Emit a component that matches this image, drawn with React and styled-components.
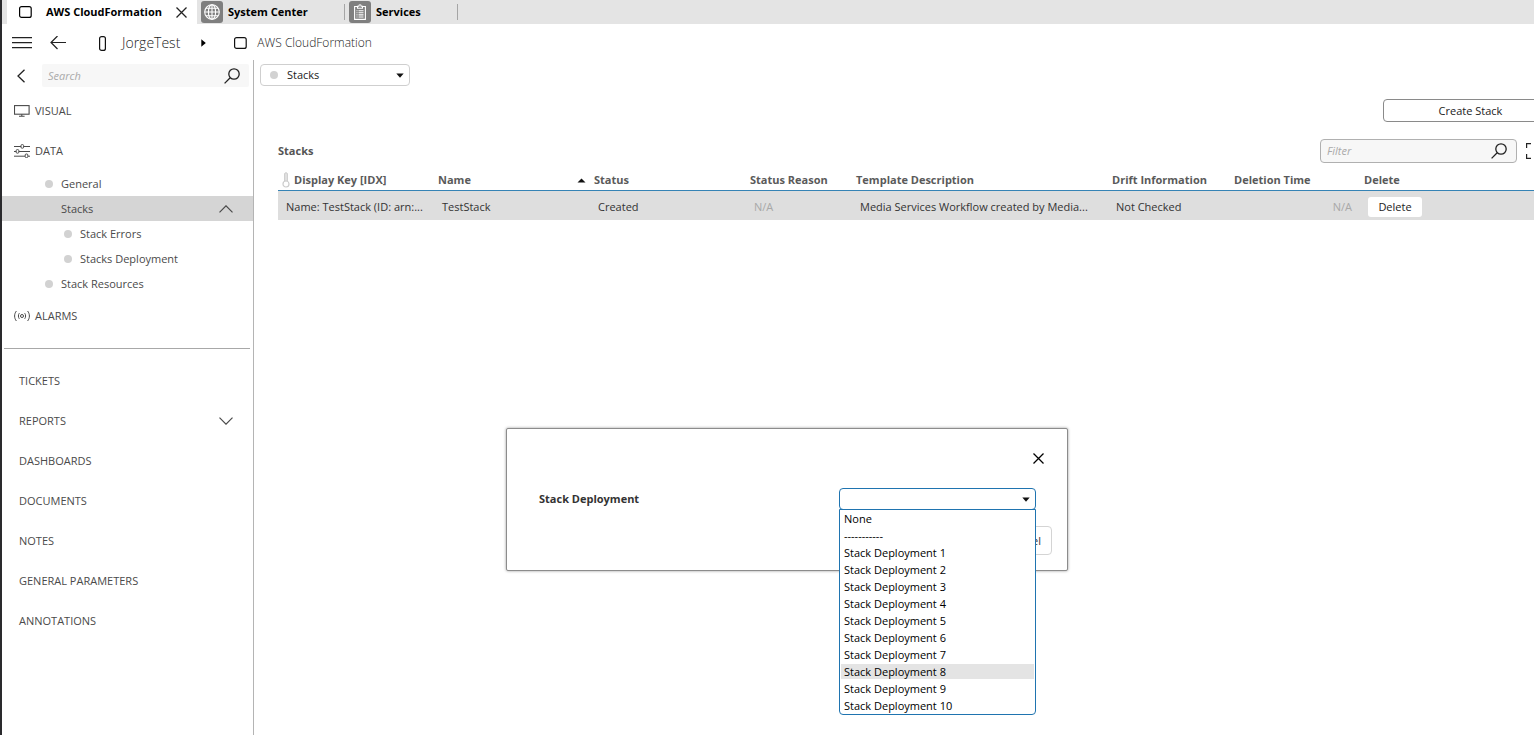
import React, { useState } from 'react'
import styled, { createGlobalStyle } from 'styled-components'

const GlobalStyle = createGlobalStyle`
    * {
        box-sizing: border-box;
    }

    body {
        margin: 0;
        background: #fff;
        color: #333;
        font: 11px/16px 'Open Sans', 'Noto Sans', sans-serif;
        overflow: hidden;
    }

    button, input, select {
        font: inherit;
        color: inherit;
        margin: 0;
    }

    button {
        cursor: pointer;
    }

    svg {
        display: block;
        flex: none;
        fill: none;
        stroke: currentColor;
    }
`

const Page = styled.div`
    display: flex;
    flex-direction: column;
    min-height: 100vh;
    border-left: 2px solid #2a2a2d;
    padding-right: 1px;
`

const TabBar = styled.nav`
    display: flex;
    height: 24px;
    padding-left: 5px;
    background: #e4e4e4;
`

const Tab = styled.div`
    display: flex;
    align-items: center;
    gap: ${props => props.$active ? '14px' : '5px'};
    width: ${props => props.$width}px;
    padding: ${props => props.$active ? '0 8px 0 12px' : '0 0 0 4px'};
    background: ${props => props.$active ? '#fff' : 'transparent'};
    border-right: 1px solid ${props => props.$active ? '#fff' : '#a5a5a5'};
    background-clip: padding-box;
    height: ${props => props.$active ? '24px' : '16px'};
    margin-top: ${props => props.$active ? '0' : '4px'};
    color: #000;
`

const TabLink = styled.a`
    color: #000;
    font-weight: 700;
    text-decoration: none;
    white-space: nowrap;
`

const TabBadge = styled.span`
    display: grid;
    place-items: center;
    width: 22px;
    height: 22px;
    border-radius: 3px;
    background: #7f7f7f;
    color: #fff;
`

const IconButton = styled.button`
    display: grid;
    place-items: center;
    flex: none;
    padding: 0;
    border: 0;
    background: none;
    color: ${props => props.$color || '#222'};
`

const Crumbs = styled.header`
    display: flex;
    align-items: center;
    height: 36px;
    padding: 2px 0 0 10px;
    color: #111;

    a {
        color: #222;
        font-size: 12px;
        font-weight: 300;
        text-decoration: none;
    }
`

const HostLink = styled.a`
    margin: 0 21px 0 16px;

    && {
        font-size: 14px;
    }
`

const ElementLink = styled.a`
    margin-left: 10px;
`

const CrumbTools = styled.div`
    display: flex;
    align-items: center;
    gap: 18px;
    margin-right: 33px;
`

const CrumbSpace = styled.span`
    width: 28px;
`

const Body = styled.div`
    display: flex;
    flex: 1;
`

const Sidebar = styled.aside`
    flex: none;
    width: 252px;
    padding-top: 4px;
    border-right: 1px solid #b4b4b4;
    color: #555;
`

const SearchRow = styled.div`
    display: flex;
    align-items: center;
    gap: 17px;
    padding: 0 4px 0 15px;
    margin-bottom: 4px;
`

const SearchBox = styled.label`
    display: flex;
    align-items: center;
    flex: ${props => props.$bordered ? 'none' : '1'};
    width: ${props => props.$bordered ? '197px' : 'auto'};
    height: ${props => props.$bordered ? '24px' : '23px'};
    padding: 0 9px 0 6px;
    border: ${props => props.$bordered ? '1px solid #b0b0b0' : '0'};
    border-radius: ${props => props.$bordered ? '4px' : '2px'};
    background: #f7f7f7;
    color: #222;

    input {
        flex: 1;
        min-width: 0;
        padding: 0;
        border: 0;
        outline: 0;
        background: none;
    }

    input::placeholder {
        color: #aaa;
        font-style: italic;
        opacity: 1;
    }
`

const Section = styled.a`
    display: flex;
    align-items: center;
    gap: 5px;
    height: 40px;
    padding: 0 20px 0 ${props => props.$icon ? '12px' : '17px'};
    color: #4a4a4a;
    text-decoration: none;
`

const TreeItem = styled.a`
    display: flex;
    align-items: center;
    gap: 8px;
    height: 25px;
    padding: 0 20px 0 ${props => props.$level === 2 ? '62px' : '43px'};
    background: ${props => props.$selected ? '#d5d5d5' : 'transparent'};
    color: #4a4a4a;
    text-decoration: none;
`

const Grow = styled.span`
    flex: 1;
`

const Dot = styled.span`
    flex: none;
    width: 8px;
    height: 8px;
    border-radius: 50%;
    background: ${props => props.$hidden ? 'transparent' : '#d2d2d2'};
`

const Divider = styled.hr`
    height: 1px;
    margin: 12px 3px 12px 2px;
    border: 0;
    background: #a8a8a8;
`

const Main = styled.main`
    flex: 1;
    min-width: 0;
    padding: 4px 0 0 6px;
    overflow: hidden;
`

const SelectWrap = styled.div`
    position: relative;
    display: flex;
    align-items: center;
    width: ${props => props.$width}px;
    height: 22px;
    border: 1px solid ${props => props.$open ? '#1f74b0' : '#cfcfcf'};
    border-radius: 4px;
    background: #fff;
    color: #222;

    select {
        flex: 1;
        min-width: 0;
        height: 100%;
        padding: 0 20px 0 9px;
        border: 0;
        outline: 0;
        background: none;
        appearance: none;
    }

    ${Dot} {
        margin-left: 9px;
    }

    svg {
        position: absolute;
        right: 5px;
        pointer-events: none;
    }
`

const Actions = styled.div`
    display: flex;
    justify-content: flex-end;
    margin: 13px -24px 0 0;
`

const CreateButton = styled.button`
    width: 175px;
    height: 23px;
    padding: 0;
    border: 1px solid #8a8a8a;
    border-radius: 4px;
    background: #fff;
    color: #222;
`

const Panel = styled.section`
    padding: 17px 0 0 18px;
`

const PanelHead = styled.div`
    display: flex;
    align-items: center;
    gap: 9px;
    margin-right: -7px;

    h2 {
        flex: 1;
        margin: 0;
        color: #555;
        font-size: 11px;
    }
`

const Table = styled.table`
    width: 100%;
    margin-top: 5px;
    border-collapse: separate;
    border-spacing: 0;
    table-layout: fixed;

    th {
        height: 23px;
        padding: 2px 4px 0;
        border-bottom: 1px solid #3583b5;
        color: #5a5a5a;
        text-align: left;
        white-space: nowrap;
    }

    td {
        height: 29px;
        padding: 2px 8px 0;
        background: #dedede;
        overflow: hidden;
        text-overflow: ellipsis;
        white-space: nowrap;
    }
`

const HeadCell = styled.div`
    display: flex;
    align-items: center;
    justify-content: space-between;
`

const KeyCell = styled(HeadCell)`
    justify-content: flex-start;
    gap: 4px;

    svg {
        color: #ccc;
    }
`

const Missing = styled.td`
    color: #a8a8a8;
    text-align: ${props => props.$right ? 'right' : 'left'};
`

const DeleteButton = styled.button`
    display: block;
    width: 54px;
    height: 20px;
    padding: 0;
    border: 0;
    border-radius: 3px;
    background: #fff;
    color: #222;
`

const Dialog = styled.div`
    position: absolute;
    top: 428px;
    left: 506px;
    width: 562px;
    padding: 24px 15px 15px 32px;
    border: 1px solid #8c8c8c;
    border-radius: 2px;
    background: #fff;
    box-shadow: 0 0 3px rgba(0, 0, 0, 0.4);
`

const DialogTop = styled.div`
    display: flex;
    justify-content: flex-end;
    height: 35px;
    padding-right: 8px;
    align-items: flex-start;
`

const DialogField = styled.div`
    display: flex;
    align-items: center;
    justify-content: space-between;
    padding-right: 16px;

    label {
        color: #333;
        font-weight: 700;
    }
`

const DialogFooter = styled.div`
    display: flex;
    justify-content: flex-end;
    margin-top: 16px;
`

const CancelButton = styled.button`
    height: 29px;
    padding: 0 10px;
    border: 1px solid #d4d4d4;
    border-radius: 4px;
    background: #fff;
`

const Options = styled.ul`
    position: absolute;
    z-index: 2;
    top: 20px;
    left: -1px;
    right: -1px;
    margin: 0;
    padding: 0 1px;
    border: 1px solid #1f74b0;
    border-radius: 0 0 4px 4px;
    background: #fff;
    list-style: none;
`

const Option = styled.li`
    height: 17px;
    padding: 0 3px;
    border: solid transparent;
    border-width: 1px 0;
    background: ${props => props.$active ? '#e4e4e4' : 'transparent'};
    background-clip: padding-box;
    color: #000;
    line-height: 15px;
    cursor: default;
`

const Square = () => (
    <svg width="13" height="12" viewBox="0 0 13 12">
        <rect x="0.6" y="0.6" width="11.6" height="10.8" rx="2" strokeWidth="1.2" />
    </svg>
)

const Cross = () => (
    <svg width="11" height="11" viewBox="0 0 11 11" strokeWidth="1.3">
        <path d="M0.5 0.5 10.5 10.5M10.5 0.5 0.5 10.5" />
    </svg>
)

const Magnifier = () => (
    <svg width="16" height="16" viewBox="0 0 16 16" strokeWidth="1.3">
        <circle cx="10" cy="6" r="5.2" />
        <path d="M6.2 9.8 0.6 15.4" />
    </svg>
)

const Chevron = ({ up }) => (
    <svg width="14" height="8" viewBox="0 0 14 8" strokeWidth="1.2">
        <path d={up ? 'M0.5 7.3 7 0.8 13.5 7.3' : 'M0.5 0.7 7 7.2 13.5 0.7'} />
    </svg>
)

const Caret = ({ up }) => (
    <svg width={up ? 9 : 8} height="5" viewBox="0 0 8 5">
        <path d={up ? 'M0 4.5 4 0.5 8 4.5Z' : 'M0.3 0.5H7.7L4 4.7Z'} fill="#111" stroke="none" />
    </svg>
)

const GlobeIcon = () => (
    <svg width="16" height="16" viewBox="0 0 16 16" strokeWidth="1.1">
        <circle cx="8" cy="8" r="7.3" />
        <ellipse cx="8" cy="8" rx="3.6" ry="7.3" />
        <path d="M8 0.7V15.3M0.7 8H15.3M1.8 4.3H14.2M1.8 11.7H14.2" />
    </svg>
)

const ClipboardIcon = () => (
    <svg width="12" height="16" viewBox="0 0 12 16" strokeWidth="1.1">
        <path d="M3.5 2.5H0.6V15.4H11.4V2.5H8.5" />
        <path d="M3.5 4.2V2.2H4.8C4.8 0.2 7.2 0.2 7.2 2.2H8.5V4.2Z" />
        <path d="M2.5 6.7H3.5M4.5 6.7H9.5M2.5 8.8H3.5M4.5 8.8H9.5M2.5 10.9H3.5M4.5 10.9H9.5M2.5 13H3.5M4.5 13H9.5" />
    </svg>
)

const MenuIcon = () => (
    <svg width="20" height="12" viewBox="0 0 20 12" strokeWidth="1.3">
        <path d="M0 0.7H20M0 5.7H20M0 10.7H20" />
    </svg>
)

const BackIcon = () => (
    <svg width="16" height="14" viewBox="0 0 16 14" strokeWidth="1.2">
        <path d="M16 6.5H1M7.5 0 1 6.5 7.5 13" />
    </svg>
)

const HostIcon = () => (
    <svg width="7" height="15" viewBox="0 0 7 15" strokeWidth="1.2">
        <rect x="0.6" y="0.6" width="5.8" height="13.8" rx="2" />
    </svg>
)

const CrumbArrow = () => (
    <svg width="5" height="8" viewBox="0 0 5 8">
        <path d="M0.3 0.3V7.7L4.8 4Z" fill="#000" stroke="none" />
    </svg>
)

const CollapseIcon = () => (
    <svg width="8" height="14" viewBox="0 0 8 14" strokeWidth="1.3">
        <path d="M7.5 0.7 1 7 7.5 13.3" />
    </svg>
)

const VisualIcon = () => (
    <svg width="16" height="12" viewBox="0 0 16 12" strokeWidth="1.1">
        <rect x="0.5" y="0.6" width="14.6" height="8.6" />
        <path d="M7.8 9.2V11M5 11.2H10.6" />
    </svg>
)

const DataIcon = () => (
    <svg width="16" height="14" viewBox="0 0 16 14" strokeWidth="1">
        <path d="M0 2.5H7M10 2.5H16M0 7.5H2M5 7.5H16M0 12.2H11M14 12.2H16" />
        <rect x="7" y="0.6" width="2.6" height="3.6" rx="1" />
        <rect x="2.2" y="5.6" width="2.6" height="3.6" rx="1" />
        <rect x="11.2" y="10" width="2.6" height="3.6" rx="1" />
    </svg>
)

const AlarmIcon = () => (
    <svg width="16" height="12" viewBox="0 0 16 12" strokeWidth="1">
        <circle cx="8" cy="6" r="1.5" />
        <path d="M5.3 3.2C4.1 4.8 4.1 7.2 5.3 8.8M10.7 3.2C11.9 4.8 11.9 7.2 10.7 8.8M2.4 1C0 4 0 8 2.4 11M13.6 1C16 4 16 8 13.6 11" />
    </svg>
)

const KeyIcon = () => (
    <svg width="8" height="16" viewBox="0 0 8 16">
        <path d="M2.6 9V1.8C2.6 0.4 5.4 0.4 5.4 1.8V9" fill="#e2e2e2" />
        <circle cx="4" cy="12" r="3" strokeWidth="1.2" />
    </svg>
)

const ExpandIcon = () => (
    <svg width="15" height="16" viewBox="0 0 15 16" strokeWidth="1.2">
        <path d="M5 0.6H0.6V5M10 0.6H14.4V5M5 15.4H0.6V11M10 15.4H14.4V11" />
    </svg>
)

const tree = [
    { name: 'General', level: 1 },
    { name: 'Stacks', level: 1, selected: true },
    { name: 'Stack Errors', level: 2 },
    { name: 'Stacks Deployment', level: 2 },
    { name: 'Stack Resources', level: 1 }
]

const links = ['TICKETS', 'REPORTS', 'DASHBOARDS', 'DOCUMENTS', 'NOTES', 'GENERAL PARAMETERS', 'ANNOTATIONS']

const columns = [156, 156, 156, 106, 256, 122, 130]

const deployments = ['None', '-----------']
for (let i = 1; i <= 10; i++) {
    deployments.push(`Stack Deployment ${i}`)
}

const SideMenu = () => (
    <Sidebar>
        <SearchRow>
            <IconButton type="button" aria-label="Collapse"><CollapseIcon /></IconButton>
            <SearchBox>
                <input type="text" placeholder="Search" aria-label="Search" />
                <Magnifier />
            </SearchBox>
        </SearchRow>
        <Section href="#visual" $icon><VisualIcon />VISUAL</Section>
        <Section href="#data" $icon><DataIcon />DATA</Section>
        {tree.map(item => (
            <TreeItem key={item.name} href="#page" $level={item.level} $selected={item.selected}>
                <Dot $hidden={item.selected} />
                <Grow>{item.name}</Grow>
                {item.selected && <Chevron up />}
            </TreeItem>
        ))}
        <Section href="#alarms" $icon><AlarmIcon />ALARMS</Section>
        <Divider />
        {links.map(name => (
            <Section key={name} href="#link">
                <Grow>{name}</Grow>
                {name === 'REPORTS' && <Chevron />}
            </Section>
        ))}
    </Sidebar>
)

const StacksTable = () => (
    <Table>
        <colgroup>
            {columns.map((width, i) => <col key={i} width={width} />)}
            <col />
        </colgroup>
        <thead>
            <tr>
                <th><KeyCell><KeyIcon />Display Key [IDX]</KeyCell></th>
                <th><HeadCell>Name <Caret up /></HeadCell></th>
                <th>Status</th>
                <th>Status Reason</th>
                <th>Template Description</th>
                <th>Drift Information</th>
                <th>Deletion Time</th>
                <th>Delete</th>
            </tr>
        </thead>
        <tbody>
            <tr>
                <td>Name: TestStack (ID: arn:...</td>
                <td>TestStack</td>
                <td>Created</td>
                <Missing>N/A</Missing>
                <td>Media Services Workflow created by Media...</td>
                <td>Not Checked</td>
                <Missing $right>N/A</Missing>
                <td><DeleteButton type="button">Delete</DeleteButton></td>
            </tr>
        </tbody>
    </Table>
)

const DeploymentDialog = () => {
    const [active, setActive] = useState('Stack Deployment 8')

    return (
        <Dialog role="dialog">
            <DialogTop>
                <IconButton type="button" aria-label="Close" $color="#000"><Cross /></IconButton>
            </DialogTop>
            <DialogField>
                <label htmlFor="deployment">Stack Deployment</label>
                <SelectWrap $width={197} $open>
                    <select id="deployment"><option /></select>
                    <Caret />
                    <Options>
                        {deployments.map(name => (
                            <Option key={name} $active={name === active} onMouseEnter={() => setActive(name)}>
                                {name}
                            </Option>
                        ))}
                    </Options>
                </SelectWrap>
            </DialogField>
            <DialogFooter>
                <CancelButton type="button">Cancel</CancelButton>
            </DialogFooter>
        </Dialog>
    )
}

const App = () => (
    <>
        <GlobalStyle />
        <Page>
            <TabBar>
                <Tab $active $width={190}>
                    <Square />
                    <TabLink href="#cloudformation">AWS CloudFormation</TabLink>
                    <IconButton type="button" aria-label="Close tab"><Cross /></IconButton>
                </Tab>
                <Tab $width={148}>
                    <TabBadge><GlobeIcon /></TabBadge>
                    <TabLink href="#system">System Center</TabLink>
                </Tab>
                <Tab $width={113}>
                    <TabBadge><ClipboardIcon /></TabBadge>
                    <TabLink href="#services">Services</TabLink>
                </Tab>
            </TabBar>
            <Crumbs>
                <CrumbTools>
                    <IconButton type="button" aria-label="Menu"><MenuIcon /></IconButton>
                    <IconButton type="button" aria-label="Back"><BackIcon /></IconButton>
                </CrumbTools>
                <HostIcon />
                <HostLink href="#host">JorgeTest</HostLink>
                <CrumbArrow />
                <CrumbSpace />
                <Square />
                <ElementLink href="#element">AWS CloudFormation</ElementLink>
            </Crumbs>
            <Body>
                <SideMenu />
                <Main>
                    <SelectWrap $width={150}>
                        <Dot />
                        <select aria-label="Page" defaultValue="Stacks"><option>Stacks</option></select>
                        <Caret />
                    </SelectWrap>
                    <Actions>
                        <CreateButton type="button">Create Stack</CreateButton>
                    </Actions>
                    <Panel>
                        <PanelHead>
                            <h2>Stacks</h2>
                            <SearchBox $bordered>
                                <input type="text" placeholder="Filter" aria-label="Filter" />
                                <Magnifier />
                            </SearchBox>
                            <IconButton type="button" aria-label="Expand"><ExpandIcon /></IconButton>
                        </PanelHead>
                        <StacksTable />
                    </Panel>
                </Main>
            </Body>
            <DeploymentDialog />
        </Page>
    </>
)

export default App
